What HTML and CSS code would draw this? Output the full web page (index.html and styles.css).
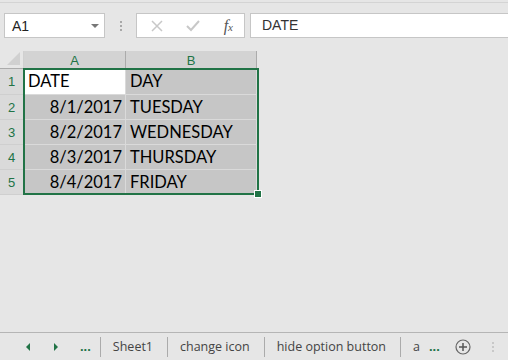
FILE: index.html
```html
<!DOCTYPE html>
<html lang="en">
<head>
    <meta charset="UTF-8">
    <title>Sheet1</title>
    <link rel="stylesheet" href="styles.css">
</head>
<body>
    <div class="app">
        <div class="formula-bar">
            <div class="name-box">
                <span>A1</span>
                <span class="caret"></span>
            </div>
            <div class="grip"><i></i><i></i><i></i></div>
            <div class="tools">
                <svg width="12" height="12" viewBox="0 0 12 12"><path d="M1 1L11 11M11 1L1 11" stroke="#c8c8c8" stroke-width="1.5"/></svg>
                <svg width="14" height="12" viewBox="0 0 14 12"><path d="M1 6L5 10L13 1" stroke="#c8c8c8" stroke-width="2" fill="none"/></svg>
                <span class="fx">f<sub>x</sub></span>
            </div>
            <div class="formula-input">DATE</div>
        </div>

        <div class="sheet">
            <div class="corner"><span class="tri"></span></div>
            <div class="col-head">A</div>
            <div class="col-head">B</div>

            <div class="row-head">1</div>
            <div class="cell active">DATE</div>
            <div class="cell">DAY</div>

            <div class="row-head">2</div>
            <div class="cell num">8/1/2017</div>
            <div class="cell">TUESDAY</div>

            <div class="row-head">3</div>
            <div class="cell num">8/2/2017</div>
            <div class="cell">WEDNESDAY</div>

            <div class="row-head">4</div>
            <div class="cell num">8/3/2017</div>
            <div class="cell">THURSDAY</div>

            <div class="row-head">5</div>
            <div class="cell num">8/4/2017</div>
            <div class="cell">FRIDAY</div>

            <div class="selection"><span class="handle"></span></div>
        </div>

        <div class="spacer"></div>

        <div class="tabs">
            <span class="nav"><span class="tri-left"></span></span>
            <span class="nav second"><span class="tri-right"></span></span>
            <span class="more">...</span>
            <span class="tab">Sheet1</span>
            <span class="tab">change icon</span>
            <span class="tab">hide option button</span>
            <span class="tab last">a</span>
            <span class="more">...</span>
            <span class="add">
                <svg width="16" height="16" viewBox="0 0 16 16"><circle cx="8" cy="8" r="7" stroke="#666" stroke-width="1.2" fill="none"/><path d="M8 4V12M4 8H12" stroke="#555" stroke-width="1.5"/></svg>
            </span>
            <div class="grip small"><i></i><i></i><i></i></div>
        </div>
    </div>
</body>
</html>
```

FILE: styles.css
```css
body {
    margin: 0;
    background-color: #e6e6e6;
    font-family: 'Liberation Sans', Arial, sans-serif;
    color: #222;
}

.app {
    width: 508px;
    height: 360px;
    display: flex;
    flex-direction: column;
    overflow: hidden;
}

.formula-bar {
    margin-top: 2px;
    border-top: 1px solid #d4d4d4;
    height: 46px;
    padding: 10px 0 0 4px;
    box-sizing: border-box;
    display: flex;
    align-items: flex-start;
}

.name-box {
    width: 101px;
    height: 25px;
    box-sizing: border-box;
    background: white;
    border: 1px solid #c6c6c6;
    display: flex;
    align-items: center;
    justify-content: space-between;
    padding: 0 5px 0 7px;
    font-size: 14px;
    color: #222;
}

.caret {
    width: 0;
    height: 0;
    border-left: 4px solid transparent;
    border-right: 4px solid transparent;
    border-top: 4px solid #777;
}

.grip {
    width: 31px;
    height: 25px;
    display: flex;
    flex-direction: column;
    align-items: center;
    justify-content: center;
    gap: 2px;
    flex-shrink: 0;
}

.grip i {
    width: 2px;
    height: 2px;
    background: #a8a8a8;
}

.tools {
    width: 109px;
    height: 25px;
    box-sizing: border-box;
    background: white;
    border: 1px solid #c6c6c6;
    display: flex;
    align-items: center;
    justify-content: space-between;
    padding: 0 11px 0 14px;
}

.fx {
    font-family: 'Liberation Serif', serif;
    font-style: italic;
    font-size: 16px;
    color: #555;
}

.fx sub {
    font-size: 11px;
    vertical-align: baseline;
}

.formula-input {
    flex: 1;
    margin-left: 5px;
    height: 25px;
    box-sizing: border-box;
    background: white;
    border: 1px solid #c6c6c6;
    border-right: none;
    padding-left: 11px;
    line-height: 23px;
    font-size: 14px;
    color: #333;
}

.sheet {
    position: relative;
    margin-top: 3px;
    display: grid;
    grid-template-columns: 24px 102px 131px;
    grid-template-rows: 18px 26px 25px 25px 25px 25px;
    width: 258px;
}

.corner {
    background: #e6e6e6;
    border-right: 1px solid #d0d0d0;
    border-bottom: 1px solid #ababab;
    position: relative;
}

.tri {
    position: absolute;
    right: 3px;
    bottom: 3px;
    width: 0;
    height: 0;
    border-left: 13px solid transparent;
    border-bottom: 13px solid #d0d0d0;
}

.col-head {
    background: #d3d3d3;
    border-right: 1px solid #ababab;
    border-bottom: 1px solid #ababab;
    text-align: center;
    font-size: 13px;
    line-height: 19px;
    color: #217346;
}

.row-head {
    background: #dadada;
    border-right: 1px solid #ababab;
    border-bottom: 1px solid #cfcfcf;
    text-align: center;
    font-size: 13px;
    line-height: 26px;
    color: #217346;
}

.cell {
    background: #c6c6c6;
    border-right: 1px solid #dadada;
    border-bottom: 1px solid #dadada;
    font-family: Lato, 'Liberation Sans', sans-serif;
    font-size: 16.5px;
    line-height: 25px;
    padding: 0 3px 0 4px;
    color: #000;
    white-space: nowrap;
}

.cell.num {
    text-align: right;
}

.cell.active {
    background: white;
}

.selection {
    position: absolute;
    left: 23px;
    top: 17px;
    width: 232px;
    height: 123px;
    border: 2px solid #217346;
}

.handle {
    position: absolute;
    right: -5px;
    bottom: -5px;
    width: 6px;
    height: 6px;
    background: #217346;
    border: 1px solid white;
}

.spacer {
    flex: 1;
}

.tabs {
    height: 27px;
    flex-shrink: 0;
    border-top: 1px solid #b5b5b5;
    display: flex;
    align-items: center;
    font-family: 'Open Sans', 'Liberation Sans', sans-serif;
    font-size: 12.5px;
    color: #444;
    padding-left: 26px;
    white-space: nowrap;
}

.nav {
    width: 28px;
    flex-shrink: 0;
    display: flex;
    align-items: center;
}

.nav.second {
    width: 26px;
}

.tri-left {
    width: 0;
    height: 0;
    border-top: 4px solid transparent;
    border-bottom: 4px solid transparent;
    border-right: 4px solid #217346;
}

.tri-right {
    width: 0;
    height: 0;
    border-top: 4px solid transparent;
    border-bottom: 4px solid transparent;
    border-left: 4px solid #217346;
}

.more {
    color: #217346;
    font-family: 'Liberation Sans', sans-serif;
    font-weight: bold;
    font-size: 13px;
    padding-right: 9px;
    flex-shrink: 0;
}

.tab {
    flex-shrink: 0;
    border-left: 1px solid #ababab;
    padding: 0 14px 0 12px;
    line-height: 20px;
}

.tab.last {
    padding-right: 9px;
}

.add {
    flex-shrink: 0;
    margin-left: 6px;
    display: flex;
}

.grip.small {
    width: 44px;
    height: 20px;
}

.grip.small i {
    background: #c8c8c8;
}
```
